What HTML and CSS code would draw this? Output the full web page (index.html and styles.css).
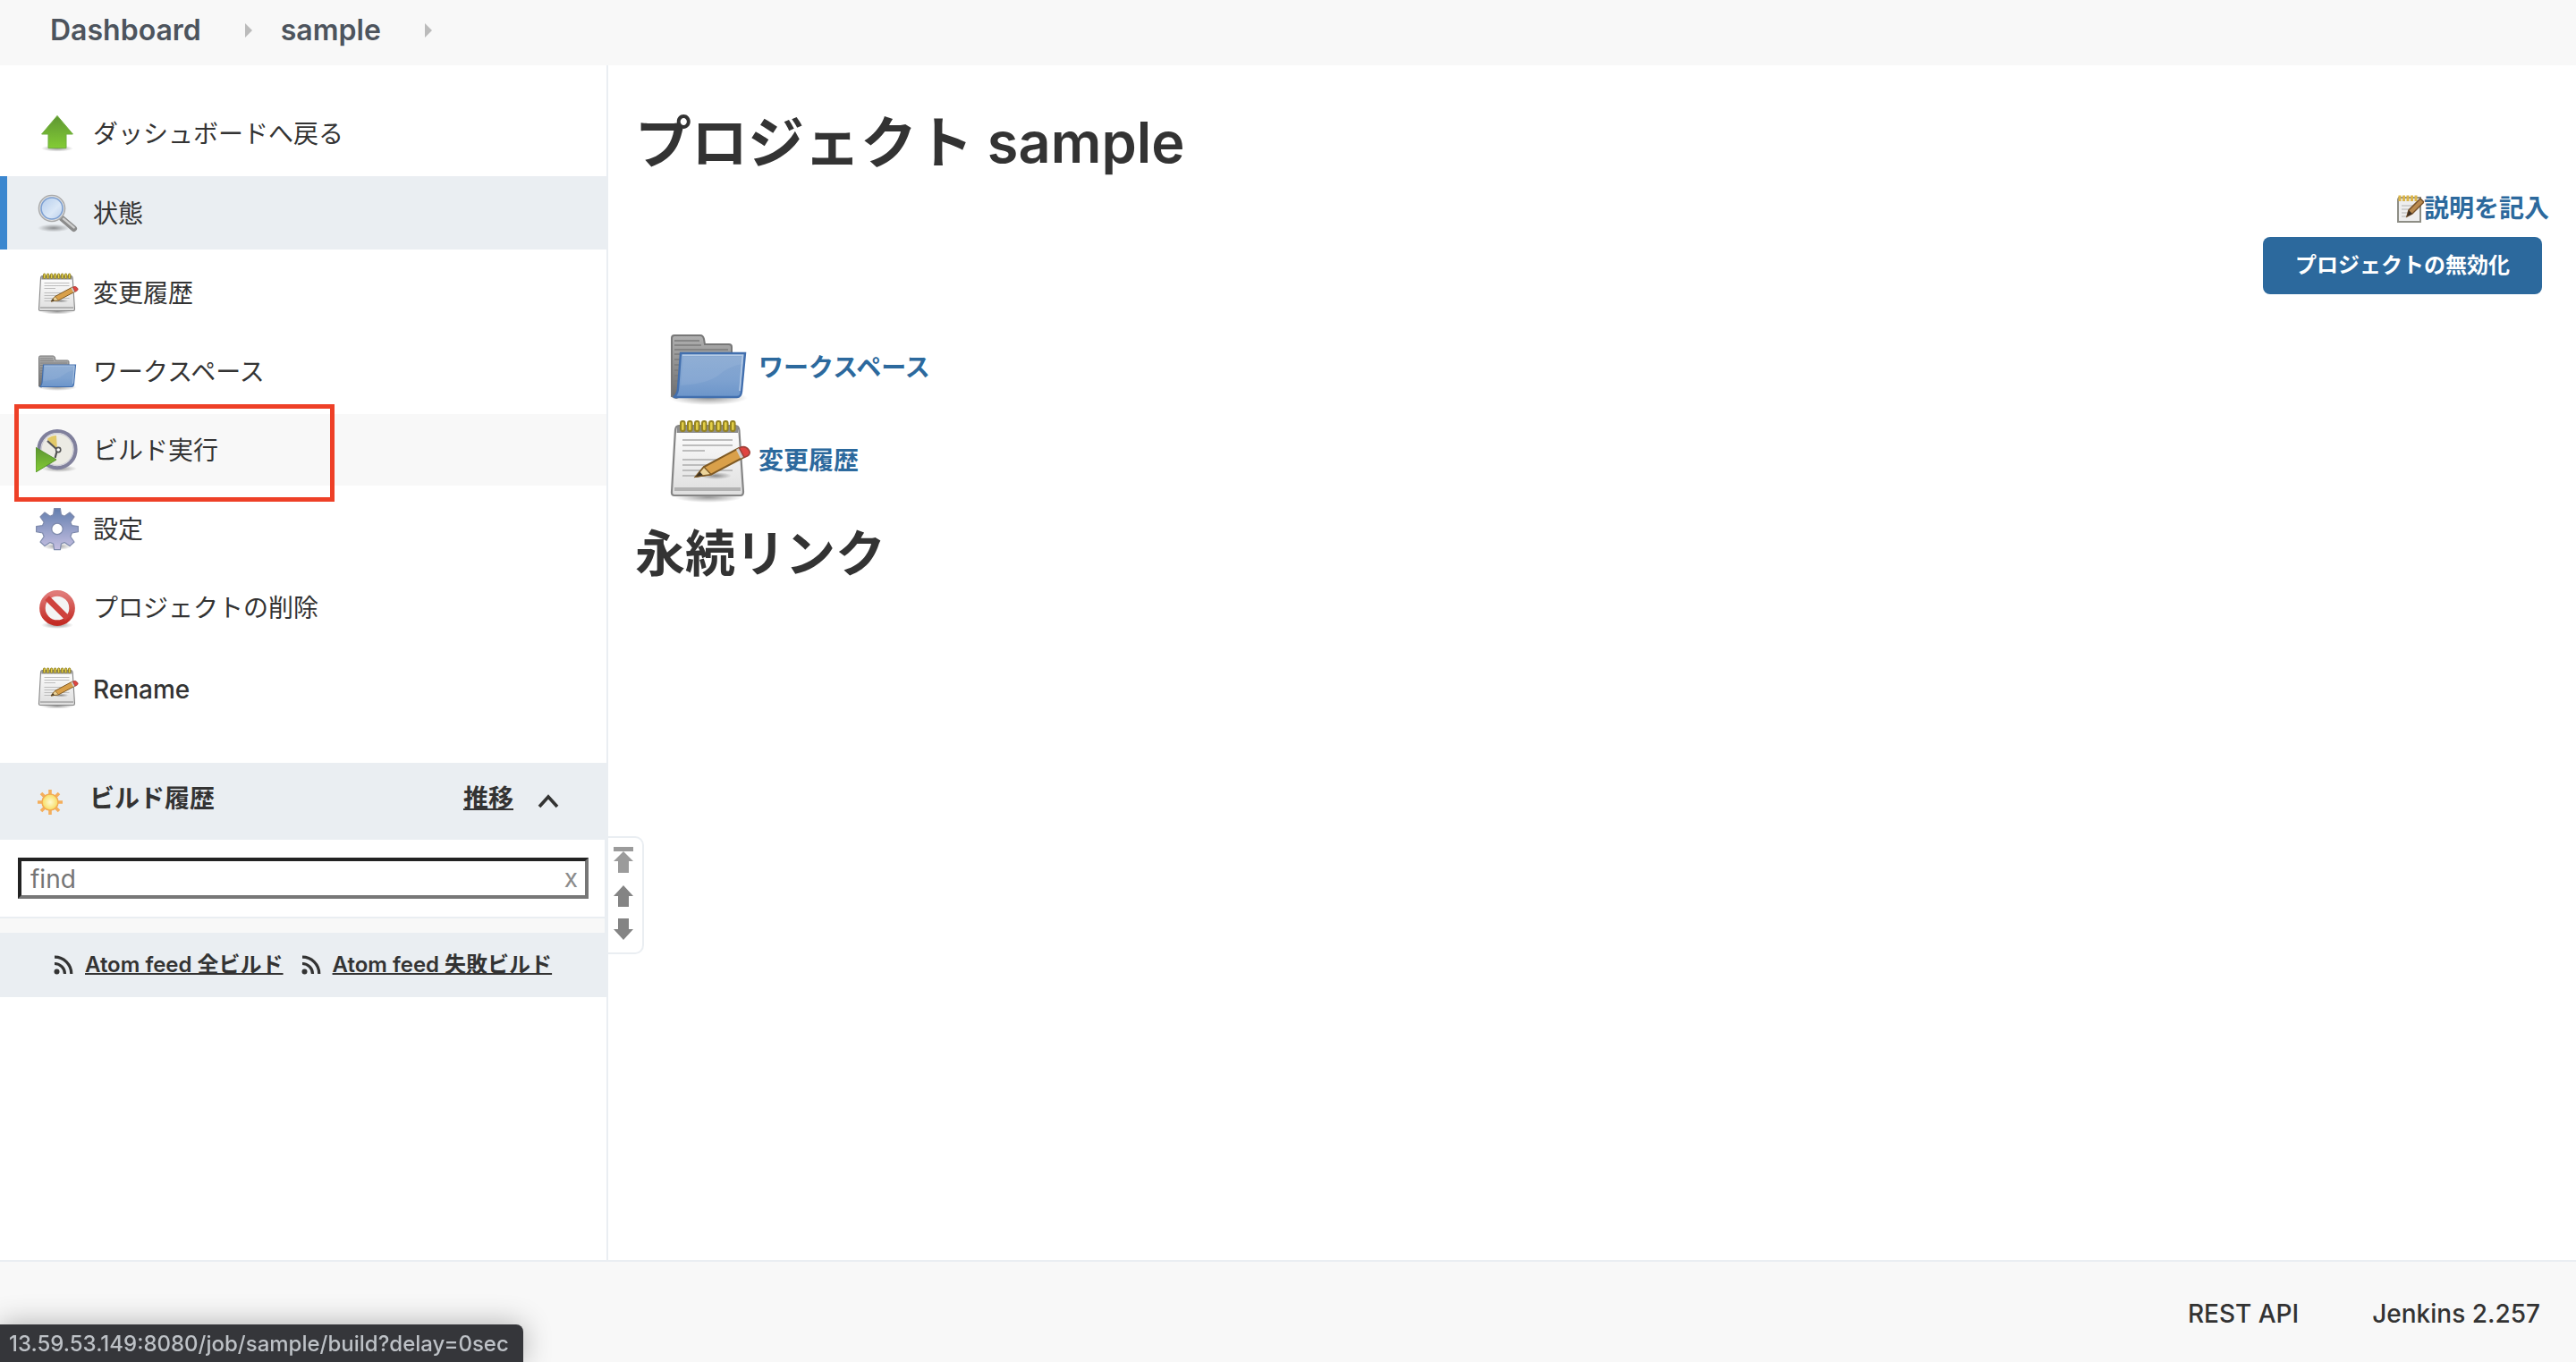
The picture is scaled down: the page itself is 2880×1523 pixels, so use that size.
FILE: index.html
```html
<!DOCTYPE html>
<html lang="ja">
<head>
<meta charset="utf-8">
<title>sample [Jenkins]</title>
<link rel="stylesheet" href="styles.css">
</head>
<body>
<svg class="defs" aria-hidden="true">
  <defs>
    <linearGradient id="green" x1="0" y1="0" x2="0" y2="1"><stop offset="0" stop-color="#5e9632"/><stop offset="1" stop-color="#83cc35"/></linearGradient>
    <linearGradient id="lens" x1="0" y1="0" x2="1" y2="1"><stop offset="0" stop-color="#b5cdec"/><stop offset=".6" stop-color="#dbe8f7"/><stop offset="1" stop-color="#b9cdea"/></linearGradient>
    <linearGradient id="blue" x1="0" y1="0" x2="0" y2="1"><stop offset="0" stop-color="#89a9d2"/><stop offset=".6" stop-color="#7ea2d0"/><stop offset="1" stop-color="#6c95ca"/></linearGradient>
    <linearGradient id="grey" x1="0" y1="0" x2="0" y2="1"><stop offset="0" stop-color="#b0b0b0"/><stop offset="1" stop-color="#6c6c6c"/></linearGradient>
    <linearGradient id="paper" x1="0" y1="0" x2="0" y2="1"><stop offset="0" stop-color="#ffffff"/><stop offset="1" stop-color="#dedede"/></linearGradient>
    <linearGradient id="cog" x1="0" y1="0" x2="0" y2="1"><stop offset="0" stop-color="#637eae"/><stop offset="1" stop-color="#c6c0e2"/></linearGradient>
    <linearGradient id="red" x1="0" y1="0" x2="0" y2="1"><stop offset="0" stop-color="#e07a78"/><stop offset="1" stop-color="#c32b24"/></linearGradient>
    <radialGradient id="shade"><stop offset="0" stop-color="#000" stop-opacity=".4"/><stop offset="1" stop-color="#000" stop-opacity="0"/></radialGradient>
    <radialGradient id="sun"><stop offset="0" stop-color="#fffbd0"/><stop offset="1" stop-color="#f7dc62"/></radialGradient>
    <symbol id="i-folder" viewBox="0 0 48 48">
      <ellipse cx="24" cy="41" rx="22" ry="4" fill="url(#shade)"/>
      <path d="M3.500 40V7.500Q3.500 6 5 6H19.500Q21 6 21.500 8L22 11H35.500Q37 11 37 12.500V30L6 41Z" fill="url(#grey)" stroke="#777" stroke-width="1"/>
      <path d="M5 9H19M5 11.500H20M5 14H35M5 16.500H8M5 19.500H8M5 22.500H8M5 25.500H7M5 28.500H7M5 31.500H7" stroke="#7b7b7b" stroke-width=".8"/>
      <path d="M8.500 16H44.500L42.500 37.500Q42.200 40.500 40 40.500H4.500Q6.500 39.500 7 36Z" fill="url(#blue)" stroke="#426fae" stroke-width="1.200"/>
      <path d="M9.500 17.100H43.200L41.500 37" fill="none" stroke="#b5cbe6" stroke-width=".8"/>
      <path d="M8.500 34Q24 33 30 28T43 22L43 18H10Z" fill="#fff" opacity=".07"/>
    </symbol>
    <symbol id="i-notepad" viewBox="0 0 48 48">
      <ellipse cx="24" cy="44.500" rx="19" ry="3" fill="url(#shade)"/>
      <path d="M7.500 4.500H39Q41 4.500 41.200 7L43.500 41.500Q43.500 43.500 42 43.500H5Q3.300 43.500 3.500 41.500L5.500 7Q5.700 4.500 7.500 4.500Z" fill="url(#paper)" stroke="#858585" stroke-width="1.100"/>
      <path d="M6.300 5H40.500V8.500H6.300Z" fill="#8d8d8d"/>
      <path d="M5 40H42" stroke="#b2b2b2" stroke-width="2"/>
      <path d="M9.500 12.500H37.500M9.500 15.500H37.500M9.500 18.500H22M9.500 23.500H35M9.500 26.500H32M9.500 29.500H37.500M9.500 32.500H20" stroke="#bdbdbd" stroke-width="1.100"/>
      <g fill="#e3cf47" stroke="#948322" stroke-width="1"><rect x="8.500" y="2" width="2.300" height="5.500" rx="1.100"/><rect x="12.500" y="2" width="2.300" height="5.500" rx="1.100"/><rect x="16.500" y="2" width="2.300" height="5.500" rx="1.100"/><rect x="20.500" y="2" width="2.300" height="5.500" rx="1.100"/><rect x="24.500" y="2" width="2.300" height="5.500" rx="1.100"/><rect x="28.500" y="2" width="2.300" height="5.500" rx="1.100"/><rect x="32.500" y="2" width="2.300" height="5.500" rx="1.100"/><rect x="36.500" y="2" width="2.300" height="5.500" rx="1.100"/></g>
      <ellipse cx="28" cy="32.500" rx="9" ry="2" fill="url(#shade)"/>
      <path d="M17 33L21.500 27.500L41 17L44 22L25.500 31.800Z" fill="#d9a04a" stroke="#7f5a24" stroke-width="1"/>
      <path d="M17 33L21.500 27.500L25.500 31.800Z" fill="#ecd49a" stroke="#7f5a24" stroke-width=".7"/>
      <path d="M17 33L19.200 30.200L21 32.200Z" fill="#3c3224"/>
      <path d="M39.500 17.900L41.500 16.800L44 21.800L42 22.900Z" fill="#cfcfcf"/>
      <path d="M41.300 17Q44.500 15.300 46.500 18T44 22.200Z" fill="#e04440" stroke="#a04038" stroke-width=".8"/>
    </symbol>
  </defs>
</svg>

<nav class="breadcrumbs" aria-label="Breadcrumb">
  <a href="#">Dashboard</a><span class="crumb-arrow"></span>
  <a href="#">sample</a><span class="crumb-arrow"></span>
</nav>

<div class="page">
  <aside class="side">
    <ul class="tasks">
      <li><a class="task" href="#"><svg class="task-icon" viewBox="0 0 24 24"><ellipse cx="12" cy="20" rx="9" ry="1.800" fill="url(#shade)"/><path d="M12 1.700L20.700 12H17V19.800H7V12H3.300Z" fill="url(#green)" stroke="#6fae3c" stroke-width=".5"/></svg>ダッシュボードへ戻る</a></li>
      <li><a class="task task-active" href="#"><svg class="task-icon" viewBox="0 0 24 24"><ellipse cx="10" cy="20" rx="9" ry="2.200" fill="url(#shade)"/><path d="M14.500 14.500L21.300 20.300" stroke="#8b8b8b" stroke-width="3.400" stroke-linecap="round"/><path d="M15.500 14.800L21.300 19.700" stroke="#cfcfcf" stroke-width="1.200" stroke-linecap="round"/><circle cx="9" cy="9" r="7.300" fill="#dedede" stroke="#a9a9a9" stroke-width=".7"/><circle cx="9" cy="9" r="6" fill="url(#lens)" stroke="#7c9fd2" stroke-width=".8"/></svg>状態</a></li>
      <li><a class="task" href="#"><svg class="task-icon"><use href="#i-notepad"/></svg>変更履歴</a></li>
      <li><a class="task" href="#"><svg class="task-icon"><use href="#i-folder"/></svg>ワークスペース</a></li>
      <li class="marked"><a class="task task-hover" href="#"><svg class="task-icon" viewBox="0 0 24 24"><ellipse cx="13" cy="22" rx="10" ry="2" fill="url(#shade)"/><circle cx="12" cy="11.300" r="10.300" fill="#ecebe4" stroke="#80809c" stroke-width="2"/><circle cx="12" cy="11.300" r="8.900" fill="none" stroke="#c9c9d6" stroke-width=".5"/><path d="M12 11.500L6.300 5.500A8 8 0 0 1 11.500 3.500Z" fill="#e2c968"/><path d="M6.500 6.500L12 11.500L10.800 16" fill="none" stroke="#555" stroke-width="1.100"/><circle cx="12.600" cy="11.500" r="1.300" fill="#fff" stroke="#555" stroke-width=".8"/><path d="M0 10.200L11.500 17L0 24Z" fill="url(#green)" stroke="#57942b" stroke-width=".5"/></svg>ビルド実行</a></li>
      <li><a class="task" href="#"><svg class="task-icon" viewBox="0 0 24 24"><ellipse cx="12" cy="21.500" rx="8" ry="2" fill="url(#shade)"/><path fill-rule="evenodd" d="M10.300.300H13.700L14.200 3.800L16 4.600L19 2.500L21.500 5L19.400 8L20.200 9.800L23.700 10.300V13.300L20.200 14L19.400 16L21.500 19L19 21.300L16 19.300L14.200 20L13.700 23.300H10.300L9.800 20L8 19.300L5 21.300L2.500 19L4.600 16L3.800 14L.300 13.300V10.300L3.800 9.800L4.600 8L2.500 5L5 2.500L8 4.600L9.800 3.800ZM12 8.600A3.100 3.100 0 1 0 12 14.800A3.100 3.100 0 1 0 12 8.600Z" fill="url(#cog)" stroke="#7e8aac" stroke-width=".6" stroke-linejoin="round"/></svg>設定</a></li>
      <li><a class="task" href="#"><svg class="task-icon" viewBox="0 0 24 24"><ellipse cx="12" cy="21.500" rx="9" ry="2" fill="url(#shade)"/><circle cx="12" cy="12" r="8.300" fill="#f4f4f4" stroke="url(#red)" stroke-width="3.300"/><path d="M6.300 6.300L17.700 17.700" stroke="#cf423d" stroke-width="3.300"/></svg>プロジェクトの削除</a></li>
      <li><a class="task task-latin" href="#"><svg class="task-icon"><use href="#i-notepad"/></svg><span>Rename</span></a></li>
    </ul>

    <section class="history">
      <header class="history-head">
        <svg class="sun" viewBox="0 0 28 28"><path d="M14 0V28M0 14H28M4 4L24 24M24 4L4 24" stroke="#f4ae5c" stroke-width="3.600"/><circle cx="14" cy="14" r="9" fill="url(#sun)" stroke="#f3ab52" stroke-width="1.500"/></svg>
        <h3>ビルド履歴</h3>
        <a class="trend" href="#">推移</a>
        <button class="collapse" type="button" aria-label="折りたたむ"><svg viewBox="0 0 24 16"><path d="M2 14L12 3L22 14" fill="none" stroke="#333" stroke-width="3.600"/></svg></button>
      </header>
      <div class="find">
        <input type="text" placeholder="find" aria-label="find">
        <button class="clear" type="button">x</button>
      </div>
      <div class="strip"></div>
      <div class="feeds">
        <svg class="rss" viewBox="0 0 22 22"><circle cx="3.500" cy="18.500" r="3" fill="#333"/><path d="M1 9.500A11.500 11.500 0 0 1 12.500 21M1 2.200A18.800 18.800 0 0 1 19.800 21" fill="none" stroke="#333" stroke-width="3.200"/></svg>
        <a href="#">Atom feed 全ビルド</a>
        <svg class="rss rss-next" viewBox="0 0 22 22"><circle cx="3.500" cy="18.500" r="3" fill="#333"/><path d="M1 9.500A11.500 11.500 0 0 1 12.500 21M1 2.200A18.800 18.800 0 0 1 19.800 21" fill="none" stroke="#333" stroke-width="3.200"/></svg>
        <a href="#">Atom feed 失敗ビルド</a>
      </div>
      <div class="pager">
        <svg viewBox="0 0 22 30" height="30"><path d="M0 0H22V5H0ZM11 5L22 16H17V29H5V16H0Z" fill="#9b9b9b"/></svg>
        <svg viewBox="0 0 22 24" height="24"><path d="M11 0L22 12H17V24H5V12H0Z" fill="#848484"/></svg>
        <svg viewBox="0 0 22 24" height="24"><path d="M11 24L22 12H17V0H5V12H0Z" fill="#848484"/></svg>
      </div>
    </section>
  </aside>

  <main class="main">
    <h1>プロジェクト sample</h1>
    <div class="actions">
      <a class="describe" href="#"><svg viewBox="0 0 30 32"><path d="M2 4H26V31H1V6Z" fill="#eee" stroke="#8e8e86" stroke-width="2"/><path d="M5 13H20M5 17H18M5 21H15M5 25H12" stroke="#c6c6c6" stroke-width="1.500"/><path d="M3 1.500V8M7.500 1.500V8M12 1.500V8M16.500 1.500V8M21 1.500V8" stroke="#dcb64a" stroke-width="3"/><path d="M11 25L13 18L26 5L30 9L17 22Z" fill="#b98a50" stroke="#76502a" stroke-width="1.500"/><path d="M11 25L13 18L17 22Z" fill="#3f3226"/></svg>説明を記入</a>
      <button class="disable" type="button">プロジェクトの無効化</button>
    </div>
    <div class="links">
      <a href="#"><svg><use href="#i-folder"/></svg>ワークスペース</a>
      <a href="#"><svg><use href="#i-notepad"/></svg>変更履歴</a>
    </div>
    <h2>永続リンク</h2>
  </main>
</div>

<footer class="footer">
  <a href="#">REST API</a>
  <a href="#">Jenkins 2.257</a>
</footer>
<div class="status">13.59.53.149:8080/job/sample/build?delay=0sec</div>
</body>
</html>
```
FILE: styles.css
```css
*, *::after { box-sizing: border-box; }

body {
  margin: 0;
  min-height: 100vh;
  display: flex;
  flex-direction: column;
  background: #fff;
  color: #333;
  font-family: Inter, "Noto Sans CJK JP", sans-serif;
  font-size: 28px;
  line-height: 40px;
}

a { color: inherit; text-decoration: none; }
button { font: inherit; border: 0; padding: 0; background: none; cursor: pointer; }
h1, h2, h3 { margin: 0; }
svg { display: block; flex: none; }
.defs { position: absolute; width: 0; height: 0; }

.breadcrumbs {
  display: flex;
  align-items: center;
  height: 73px;
  padding: 0 56px 6px;
  background: #f8f8f8;
  color: #4d545d;
  font-size: 32px;
  font-weight: 600;
}
.crumb-arrow {
  margin: 0 32px 0 49px;
  border: solid transparent;
  border-width: 8px 0 8px 8px;
  border-left-color: #bbb;
}

.page { display: flex; flex: 1; }

.side {
  width: 680px;
  flex: none;
  border-right: 2px solid #eaeef2;
}

.tasks {
  display: flex;
  flex-direction: column;
  gap: 8px;
  margin: 0;
  padding: 36px 0 44px;
  list-style: none;
}
.task {
  display: flex;
  align-items: center;
  gap: 16px;
  height: 80px;
  padding: 2px 0 0 40px;
}
.task-icon { width: 48px; height: 48px; }
.task-active {
  height: 82px;
  padding-left: 32px;
  border-left: 8px solid #3b87cf;
  background: #eaeef2;
}
.task-hover { background: #f8f8f8; }
.task-latin { height: 82px; font-weight: 500; }
.task-latin span { padding-top: 4px; }
.marked { position: relative; }
.marked::after {
  content: "";
  position: absolute;
  left: 16px;
  top: -11px;
  width: 358px;
  height: 109px;
  border: 5px solid #ee4027;
  pointer-events: none;
}

.history { position: relative; background: #eaeef2; }
.history-head {
  display: flex;
  align-items: center;
  height: 86px;
  padding: 0 52px 6px 42px;
}
.history-head h3 { margin-left: 30px; font-size: 28px; font-weight: 600; }
.sun { width: 28px; height: 28px; margin-top: 8px; }
.trend {
  margin-left: auto;
  font-weight: 600;
  text-decoration: underline;
  text-decoration-thickness: 2px;
}
.collapse { margin: 6px 0 0 26px; }
.collapse svg { width: 26px; height: 16px; }

.find {
  position: relative;
  margin-right: 2px;
  padding: 20px 18px 20px 20px;
  background: #fff;
}
.find input {
  display: block;
  width: 100%;
  height: 46px;
  padding: 2px 32px 0 10px;
  border: 4px solid;
  border-color: #222 #777 #777 #222;
  background: #fff;
  font: inherit;
}
.find input::placeholder { color: #757575; opacity: 1; }
.clear {
  position: absolute;
  right: 30px;
  top: 23px;
  color: #8c8c8c;
}
.strip {
  height: 18px;
  margin-right: 2px;
  border-top: 2px solid #eaeef2;
  background: #f8f8f8;
}
.feeds {
  display: flex;
  align-items: center;
  height: 72px;
  padding-left: 60px;
  font-size: 24px;
  font-weight: 600;
}
.feeds a { text-decoration: underline; text-decoration-thickness: 2px; }
.rss { width: 22px; height: 22px; margin-right: 13px; }
.rss-next { margin-left: 20px; }

.pager {
  position: absolute;
  left: 100%;
  top: 82px;
  display: flex;
  flex-direction: column;
  align-items: center;
  gap: 13px;
  width: 42px;
  height: 132px;
  padding: 10px 4px 0 0;
  border: 2px solid #eaeef2;
  border-radius: 0 10px 10px 0;
  background: #fff;
}
.pager svg { width: 22px; }

.main { flex: 1; padding: 42px 30px 0; }
.main h1 { font-size: 63px; line-height: 88px; font-weight: 600; }
.main h2 { font-size: 56px; line-height: 80px; font-weight: 600; }

.actions {
  display: flex;
  flex-direction: column;
  align-items: flex-end;
  gap: 12px;
  padding-top: 10px;
}
.describe {
  display: flex;
  align-items: center;
  color: #2c699d;
  font-weight: 600;
}
.describe svg { width: 30px; height: 32px; }
.disable {
  height: 64px;
  margin-right: 8px;
  padding: 0 36px;
  border-radius: 8px;
  background: #2c699d;
  color: #fff;
  font-size: 24px;
  font-weight: 600;
}

.links {
  display: flex;
  flex-direction: column;
  align-items: flex-start;
  gap: 8px;
  padding: 34px 0 16px 34px;
}
.links a {
  display: flex;
  align-items: center;
  gap: 8px;
  color: #2c699d;
  font-weight: 600;
}
.links svg { width: 96px; height: 96px; }

.footer {
  display: flex;
  justify-content: flex-end;
  gap: 82px;
  height: 114px;
  padding: 38px 40px 0;
  border-top: 2px solid #eaeef2;
  background: #f8f8f8;
  font-weight: 500;
}

.status {
  position: fixed;
  left: 0;
  bottom: 0;
  padding: 2px 16px 0 10px;
  border-radius: 0 8px 0 0;
  background: #35363a;
  box-shadow: 0 0 32px rgba(0, 0, 0, .3);
  color: #bdc1c6;
  font-size: 24px;
  font-weight: 500;
}
```
